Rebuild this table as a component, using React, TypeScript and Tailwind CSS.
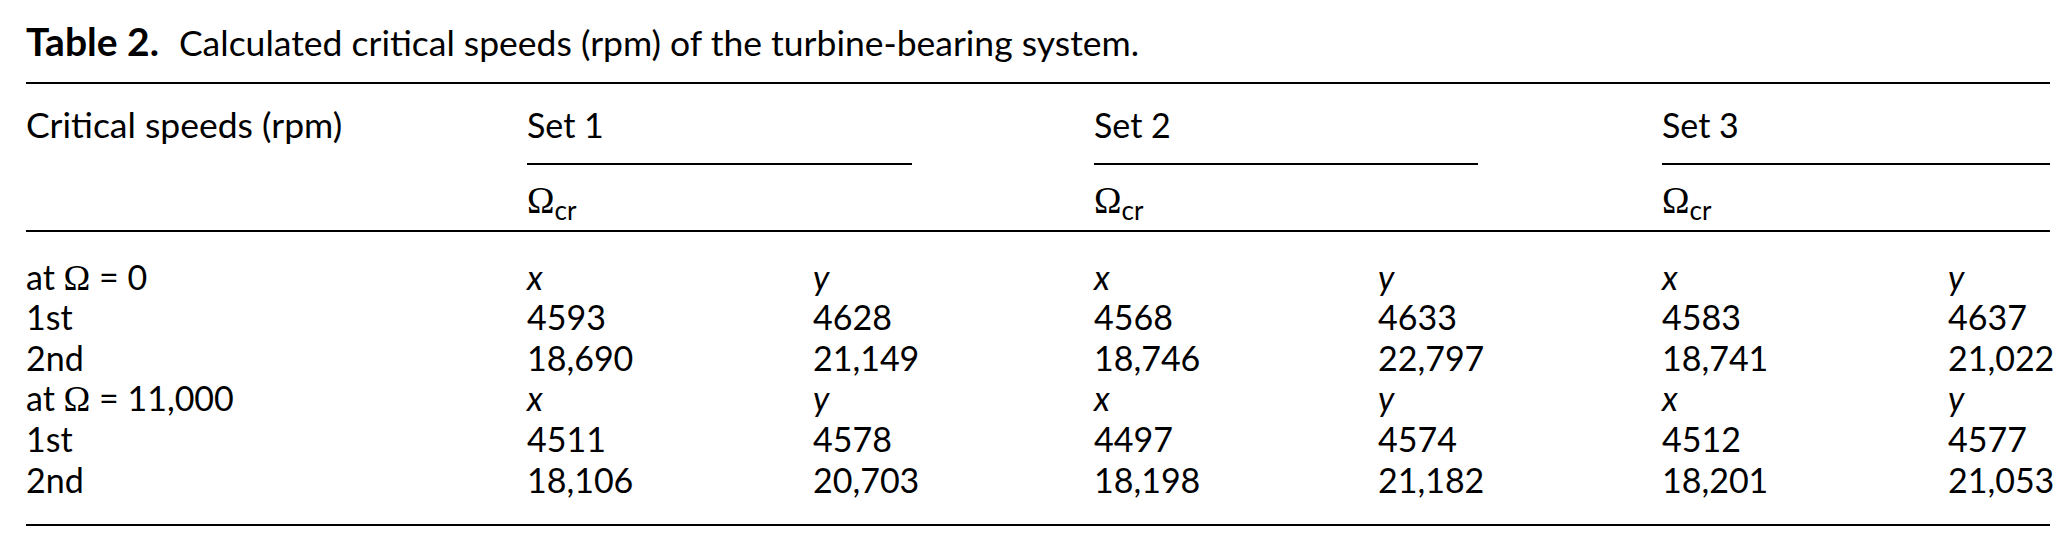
import React from "react";

const cols = "grid grid-cols-[501px_286px_281px_284px_284px_286px_102px] w-[2024px]";

function Om() {
  return <span className="font-['Liberation_Serif',serif] text-[36px]">Ω</span>;
}

function OmCr() {
  return (
    <span className="inline-flex items-baseline">
      <span className="font-['Liberation_Serif',serif] text-[37px]">Ω</span>
      <span className="text-[26px] relative top-[7px]">cr</span>
    </span>
  );
}

const rows: { label: React.ReactNode; vals: string[]; italic?: boolean }[] = [
  { label: <>at <Om /> = 0</>, vals: ["x", "y", "x", "y", "x", "y"], italic: true },
  { label: "1st", vals: ["4593", "4628", "4568", "4633", "4583", "4637"] },
  { label: "2nd", vals: ["18,690", "21,149", "18,746", "22,797", "18,741", "21,022"] },
  { label: <>at <Om /> = 11,000</>, vals: ["x", "y", "x", "y", "x", "y"], italic: true },
  { label: "1st", vals: ["4511", "4578", "4497", "4574", "4512", "4577"] },
  { label: "2nd", vals: ["18,106", "20,703", "18,198", "21,182", "18,201", "21,053"] },
];

export default function App() {
  return (
    <div className="w-[2065px] h-[551px] bg-white text-black pl-[26px] pt-[21px] font-['Lato',sans-serif] text-[34px]">
      <div className="leading-[40px] h-[40px] whitespace-nowrap">
        <span className="font-bold text-[39px]">Table 2.</span>
        <span className="ml-[20px] text-[35.5px]">Calculated critical speeds (rpm) of the turbine-bearing system.</span>
      </div>
      <div className="mt-[21px] w-[2024px] h-[2px] bg-black" />
      <div className={cols + " mt-[21px]"}>
        <div className="h-[40px] leading-[40px] whitespace-nowrap text-[35.5px]">Critical speeds (rpm)</div>
        <div className="col-span-2 h-[40px] leading-[40px]">Set 1</div>
        <div className="col-span-2 h-[40px] leading-[40px]">Set 2</div>
        <div className="col-span-2 h-[40px] leading-[40px]">Set 3</div>
      </div>
      <div className={cols + " mt-[18px]"}>
        <div />
        <div className="col-span-2"><div className="w-[385px] h-[2px] bg-black" /></div>
        <div className="col-span-2"><div className="w-[384px] h-[2px] bg-black" /></div>
        <div className="col-span-2"><div className="w-[388px] h-[2px] bg-black" /></div>
      </div>
      <div className={cols + " mt-[15px]"}>
        <div className="h-[40px]" />
        <div className="col-span-2 h-[40px] leading-[40px]"><OmCr /></div>
        <div className="col-span-2 h-[40px] leading-[40px]"><OmCr /></div>
        <div className="col-span-2 h-[40px] leading-[40px]"><OmCr /></div>
      </div>
      <div className="mt-[10px] w-[2024px] h-[2px] bg-black" />
      <div className={cols + " mt-[24.7px]"}>
        {rows.map((r, i) => (
          <React.Fragment key={i}>
            <div className="h-[40.6px] leading-[40.6px] whitespace-nowrap">{r.label}</div>
            {r.vals.map((v, j) => (
              <div key={j} className={"h-[40.6px] leading-[40.6px] whitespace-nowrap" + (r.italic ? " italic" : "")}>
                {v}
              </div>
            ))}
          </React.Fragment>
        ))}
      </div>
      <div className="mt-[23.7px] w-[2024px] h-[2px] bg-black" />
    </div>
  );
}
